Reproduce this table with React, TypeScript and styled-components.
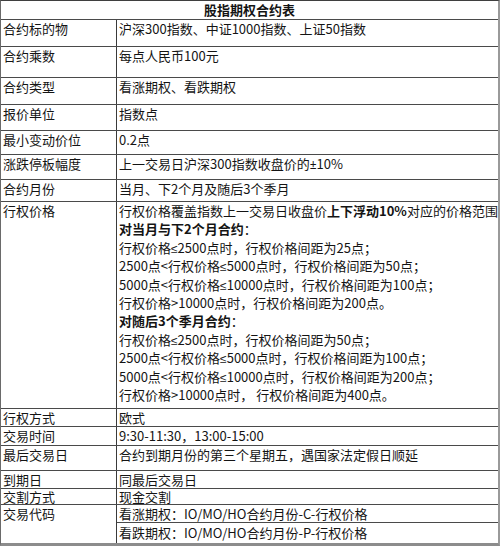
import React from 'react';
import styled, { createGlobalStyle } from 'styled-components';

const GlobalStyle = createGlobalStyle`
  html, body {
    margin: 0;
    padding: 0;
    background: #ffffff;
  }
  body {
    font-family: "Noto Sans CJK SC", "Noto Sans", sans-serif;
    font-size: 13px;
    line-height: 18.4px;
    color: #141414;
  }
`;

type Spec = {
  label: string;
  height: number;
  content: React.ReactNode;
};

const Sheet = styled.div`
  width: 500px;
  box-sizing: border-box;
  border-top: 1px solid #3f3f3f;
  border-left: 1px solid #6a6a6a;
  border-right: 2px solid #9a9a9a;
  border-bottom: 3px solid #8c8c8c;
`;

const TitleRow = styled.div`
  height: 19px;
  box-sizing: border-box;
  border-bottom: 1px solid #4a4a4a;
  text-align: center;
  font-weight: 700;
`;

const Row = styled.div<{ $height: number; $last?: boolean }>`
  display: grid;
  grid-template-columns: 116px 1fr;
  height: ${({ $height }) => $height}px;
  line-height: ${({ $height }) => Math.min($height - 1, 18.4)}px;
  box-sizing: border-box;
  overflow: hidden;
  border-bottom: ${({ $last }) => ($last ? 'none' : '1px solid #4a4a4a')};
`;

const Label = styled.div`
  box-sizing: border-box;
  padding: 0 2px;
  border-right: 1px solid #3a3a3a;
  white-space: nowrap;
`;

const Value = styled.div`
  padding: 0 2px;
  white-space: nowrap;
  overflow: hidden;
`;

const Split = styled.div`
  display: flex;
  flex-direction: column;
  white-space: nowrap;
  line-height: 18.4px;
`;

const SubLine = styled.div<{ $divider?: boolean }>`
  height: ${({ $divider }) => ($divider ? '18px' : 'auto')};
  line-height: ${({ $divider }) => ($divider ? '17px' : '19px')};
  box-sizing: border-box;
  padding: 0 2px;
  border-bottom: ${({ $divider }) => ($divider ? '1px solid #4a4a4a' : 'none')};
`;

const Line = styled.div`
  height: 18.4px;
`;

const Strong = styled.b`
  font-weight: 700;
`;

// narrow math signs, as in the reference (not the full-width CJK forms)
const Sym = styled.span`
  font-family: "Noto Sans", "Liberation Sans", sans-serif;
  font-size: 12px;
  line-height: 0;
`;

const LE = () => <Sym>≤</Sym>;

const strikeLines = (
  <>
    <Line>
      行权价格覆盖指数上一交易日收盘价<Strong>上下浮动10%</Strong>对应的价格范围
    </Line>
    <Line>
      <Strong>对当月与下2个月合约</Strong>：
    </Line>
    <Line>
      行权价格<LE />2500点时，行权价格间距为25点；
    </Line>
    <Line>
      2500点&lt;行权价格<LE />5000点时，行权价格间距为50点；
    </Line>
    <Line>
      5000点&lt;行权价格<LE />10000点时，行权价格间距为100点；
    </Line>
    <Line>行权价格&gt;10000点时，行权价格间距为200点。</Line>
    <Line>
      <Strong>对随后3个季月合约</Strong>：
    </Line>
    <Line>
      行权价格<LE />2500点时，行权价格间距为50点；
    </Line>
    <Line>
      2500点&lt;行权价格<LE />5000点时，行权价格间距为100点；
    </Line>
    <Line>
      5000点&lt;行权价格<LE />10000点时，行权价格间距为200点；
    </Line>
    <Line>行权价格&gt;10000点时， 行权价格间距为400点。</Line>
  </>
);

const rows: Spec[] = [
  { label: '合约标的物', height: 27, content: '沪深300指数、中证1000指数、上证50指数' },
  { label: '合约乘数', height: 31, content: '每点人民币100元' },
  { label: '合约类型', height: 27, content: '看涨期权、看跌期权' },
  { label: '报价单位', height: 26, content: '指数点' },
  { label: '最小变动价位', height: 24, content: '0.2点' },
  {
    label: '涨跌停板幅度',
    height: 25,
    content: (
      <>
        上一交易日沪深300指数收盘价的<Sym>±</Sym>10%
      </>
    ),
  },
  { label: '合约月份', height: 22, content: '当月、下2个月及随后3个季月' },
  { label: '行权价格', height: 207, content: strikeLines },
  { label: '行权方式', height: 18, content: '欧式' },
  { label: '交易时间', height: 19, content: '9:30-11:30，13:00-15:00' },
  { label: '最后交易日', height: 25, content: '合约到期月份的第三个星期五，遇国家法定假日顺延' },
  { label: '到期日', height: 18, content: '同最后交易日' },
  { label: '交割方式', height: 16, content: '现金交割' },
];

export default function App() {
  return (
    <>
      <GlobalStyle />
      <Sheet>
        <TitleRow>股指期权合约表</TitleRow>
        {rows.map((row) => (
          <Row key={row.label} $height={row.height}>
            <Label>{row.label}</Label>
            <Value>{row.content}</Value>
          </Row>
        ))}
        <Row $height={38} $last>
          <Label>交易代码</Label>
          <Split>
            <SubLine $divider>看涨期权：IO/MO/HO合约月份-C-行权价格</SubLine>
            <SubLine>看跌期权：IO/MO/HO合约月份-P-行权价格</SubLine>
          </Split>
        </Row>
      </Sheet>
    </>
  );
}
